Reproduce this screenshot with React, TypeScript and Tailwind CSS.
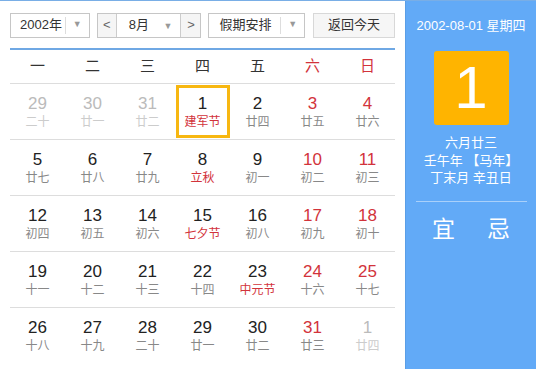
import React from "react";

type Day = { n: number; lunar: string; faded?: boolean; weekend?: boolean; fest?: boolean; sel?: boolean };

const WEEK = ["一", "二", "三", "四", "五", "六", "日"];

const ROWS: Day[][] = [
  [
    { n: 29, lunar: "二十", faded: true },
    { n: 30, lunar: "廿一", faded: true },
    { n: 31, lunar: "廿二", faded: true },
    { n: 1, lunar: "建军节", fest: true, sel: true },
    { n: 2, lunar: "廿四" },
    { n: 3, lunar: "廿五", weekend: true },
    { n: 4, lunar: "廿六", weekend: true },
  ],
  [
    { n: 5, lunar: "廿七" },
    { n: 6, lunar: "廿八" },
    { n: 7, lunar: "廿九" },
    { n: 8, lunar: "立秋", fest: true },
    { n: 9, lunar: "初一" },
    { n: 10, lunar: "初二", weekend: true },
    { n: 11, lunar: "初三", weekend: true },
  ],
  [
    { n: 12, lunar: "初四" },
    { n: 13, lunar: "初五" },
    { n: 14, lunar: "初六" },
    { n: 15, lunar: "七夕节", fest: true },
    { n: 16, lunar: "初八" },
    { n: 17, lunar: "初九", weekend: true },
    { n: 18, lunar: "初十", weekend: true },
  ],
  [
    { n: 19, lunar: "十一" },
    { n: 20, lunar: "十二" },
    { n: 21, lunar: "十三" },
    { n: 22, lunar: "十四" },
    { n: 23, lunar: "中元节", fest: true },
    { n: 24, lunar: "十六", weekend: true },
    { n: 25, lunar: "十七", weekend: true },
  ],
  [
    { n: 26, lunar: "十八" },
    { n: 27, lunar: "十九" },
    { n: 28, lunar: "二十" },
    { n: 29, lunar: "廿一" },
    { n: 30, lunar: "廿二" },
    { n: 31, lunar: "廿三", weekend: true },
    { n: 1, lunar: "廿四", faded: true },
  ],
];

function Caret() {
  return <span className="text-[9px] text-[#999]">▼</span>;
}

function DayCell({ d }: { d: Day }) {
  const numColor = d.faded ? "text-[#bbb]" : d.weekend ? "text-[#d2333b]" : "text-[#222]";
  const lunarColor = d.faded ? "text-[#ccc]" : d.fest ? "text-[#d2333b]" : "text-[#888]";
  return (
    <div className="flex h-[55px] items-center justify-center">
      <div
        className={`flex h-[53px] w-[54px] flex-col items-center justify-center ${
          d.sel ? "border-[3px] border-[#f7b711]" : ""
        }`}
      >
        <span className={`text-[17px] leading-[20px] ${numColor}`}>{d.n}</span>
        <span className={`text-[12px] leading-[16px] ${lunarColor}`}>{d.lunar}</span>
      </div>
    </div>
  );
}

export default function App() {
  return (
    <div
      className="flex h-[369px] w-[536px] overflow-hidden border-t border-[#79aee6] bg-white"
      style={{ fontFamily: '"Liberation Sans", "Noto Sans CJK SC", sans-serif' }}
    >
      <div className="w-[405px] shrink-0 px-[10px]">
        <div className="flex h-[47px] items-center gap-[7px] pt-[1px] text-[13px] text-[#333]">
          <div className="flex h-[25px] w-[80px] items-center border border-[#c6c6c6]">
            <span className="flex-1 pl-[9px]">2002年</span>
            <span className="flex h-[17px] w-[24px] items-center justify-center border-l border-[#ddd]">
              <Caret />
            </span>
          </div>
          <div className="flex h-[25px] w-[105px] items-center border border-[#c6c6c6]">
            <span className="flex h-full w-[19px] items-center justify-center border-r border-[#ccc] bg-[#f5f5f5] text-[#666]">
              &lt;
            </span>
            <span className="flex-1 pl-[12px]">8月</span>
            <span className="mr-[8px]">
              <Caret />
            </span>
            <span className="flex h-full w-[20px] items-center justify-center border-l border-[#ccc] bg-[#f5f5f5] text-[#666]">
              &gt;
            </span>
          </div>
          <div className="flex h-[25px] w-[97px] items-center border border-[#c6c6c6]">
            <span className="flex-1 pl-[10px]">假期安排</span>
            <span className="flex h-[17px] w-[24px] items-center justify-center border-l border-[#ddd]">
              <Caret />
            </span>
          </div>
          <div className="ml-[1px] flex h-[25px] w-[82px] items-center justify-center border border-[#d8d8d8] bg-[#f6f6f6]">
            返回今天
          </div>
        </div>
        <div className="h-[2px] bg-[#6fa8e4]" />
        <div className="grid h-[34px] grid-cols-7 items-center border-b border-[#ddd] text-[15px]">
          {WEEK.map((w, i) => (
            <span key={w} className={`text-center ${i >= 5 ? "text-[#d2333b]" : "text-[#333]"}`}>
              {w}
            </span>
          ))}
        </div>
        {ROWS.map((row, r) => (
          <div key={r} className={`grid grid-cols-7 ${r < 4 ? "border-b border-[#ddd]" : ""}`}>
            {row.map((d, i) => (
              <DayCell key={i} d={d} />
            ))}
          </div>
        ))}
      </div>
      <div className="flex flex-1 flex-col items-center border-l border-[#5a9ee6] bg-[#62aaf7] text-white">
        <div className="mt-[16px] text-[13px] leading-[18px]">2002-08-01 星期四</div>
        <div className="mt-[16px] flex h-[74px] w-[75px] items-center justify-center rounded-[3px] bg-[#ffb400] text-[60px] leading-none">
          1
        </div>
        <div className="mt-[9px] flex flex-col items-center text-[13px] leading-[17.5px]">
          <span>六月廿三</span>
          <span>壬午年 【马年】</span>
          <span>丁末月 辛丑日</span>
        </div>
        <div className="mt-[14px] h-px w-[111px] bg-[#a9d0fa]" />
        <div className="mt-[12px] flex gap-[32px] text-[23px] leading-[30px]">
          <span>宜</span>
          <span>忌</span>
        </div>
      </div>
    </div>
  );
}
